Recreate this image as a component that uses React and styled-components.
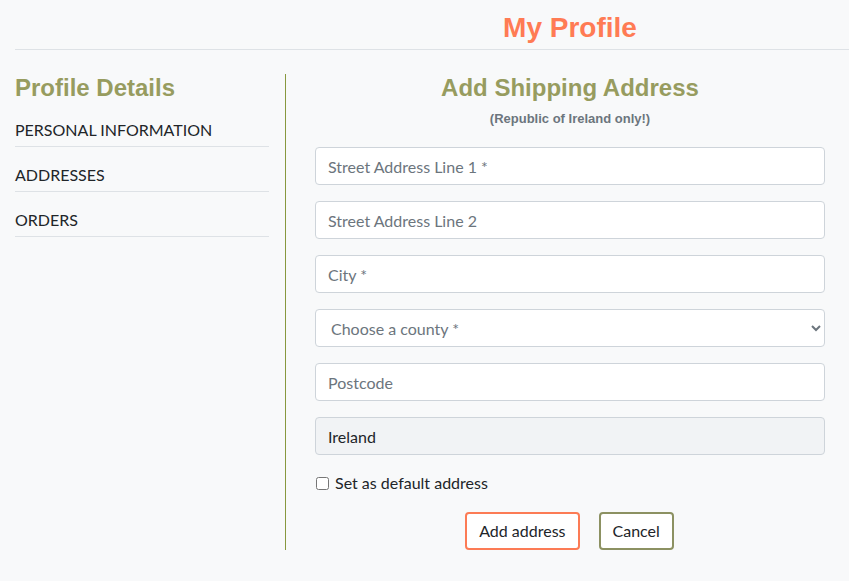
import React from "react";
import styled, { createGlobalStyle } from "styled-components";

const Global = createGlobalStyle`
  html, body { margin: 0; padding: 0; background: #f8f9fa; overflow: hidden; }
  body { font-family: Lato, "Noto Sans", sans-serif; color: #212529; }
  * { box-sizing: border-box; }
`;

const Page = styled.div`
  padding: 11px 0 0 15px;
  width: 870px;
`;

const Header = styled.header`
  display: grid;
  grid-template-columns: 270px 570px;
  border-bottom: 1px solid #dee2e6;
  padding-bottom: 4px;
`;

const Title = styled.h1`
  grid-column: 2;
  margin: 0;
  text-align: center;
  font-family: "Liberation Sans", Arial, sans-serif;
  font-weight: 700;
  font-size: 28px;
  line-height: 34px;
  color: #ff7b54;
`;

const Main = styled.div`
  display: grid;
  grid-template-columns: 270px 570px;
  margin-top: 24px;
`;

const Sidebar = styled.aside`
  padding-right: 16px;
`;

const Heading = styled.h2`
  margin: 0;
  font-family: "Liberation Sans", Arial, sans-serif;
  font-weight: 700;
  font-size: 24px;
  line-height: 28px;
  color: #979c5f;
  text-align: ${(p) => (p.$center ? "center" : "left")};
`;

const NavList = styled.ul`
  list-style: none;
  margin: 0;
  padding: 0;
`;

const NavItem = styled.li`
  padding: 19px 0 7px;
  line-height: 18px;
  font-size: 16px;
  color: #212529;
  text-transform: uppercase;
  border-bottom: 1px solid #dee2e6;
`;

const Content = styled.section`
  border-left: 1px solid #88983e;
  padding: 0 30px 0 29px;
`;

const Subtitle = styled.p`
  margin: 9px 0 0;
  text-align: center;
  font-family: "Liberation Sans", Arial, sans-serif;
  font-weight: 700;
  font-size: 13px;
  line-height: 16px;
  color: #6c757d;
`;

const Form = styled.form`
  display: flex;
  flex-direction: column;
  gap: 16px;
  margin-top: 20px;
`;

const Field = styled.input`
  height: 38px;
  width: 100%;
  padding: 6px 12px;
  font-family: Lato, sans-serif;
  font-size: 16px;
  line-height: 24px;
  color: #212529;
  background: ${(p) => (p.disabled ? "#f1f3f5" : "#fff")};
  border: 1px solid #ced4da;
  border-radius: 4px;
  outline: none;
  &::placeholder { color: #6c757d; opacity: 1; }
`;

const Select = styled.select`
  height: 38px;
  width: 100%;
  padding: 6px 8px 6px 11px;
  font-family: Lato, sans-serif;
  font-size: 16px;
  color: #6c757d;
  background: #fff;
  border: 1px solid #ced4da;
  border-radius: 4px;
  outline: none;
`;

const CheckRow = styled.label`
  display: flex;
  align-items: center;
  font-size: 16px;
  line-height: 24px;
  color: #212529;
`;

const Check = styled.input`
  margin: 0 6px 0 1px;
  width: 13px;
  height: 13px;
`;

const Actions = styled.div`
  display: flex;
  justify-content: center;
  gap: 19px;
  margin-top: 1px;
  padding-right: 1px;
`;

const Button = styled.button`
  height: 38px;
  padding: 5px 12px;
  font-family: Lato, sans-serif;
  font-size: 16px;
  line-height: 24px;
  color: #212529;
  background: #fff;
  border: 2px solid ${(p) => (p.$tone === "primary" ? "#fc7b55" : "#8c9162")};
  border-radius: 4px;
  cursor: pointer;
`;

export default function App() {
  return (
    <Page>
      <Global />
      <Header>
        <Title>My Profile</Title>
      </Header>
      <Main>
        <Sidebar>
          <Heading>Profile Details</Heading>
          <NavList>
            <NavItem>Personal Information</NavItem>
            <NavItem>Addresses</NavItem>
            <NavItem>Orders</NavItem>
          </NavList>
        </Sidebar>
        <Content>
          <Heading $center>Add Shipping Address</Heading>
          <Subtitle>(Republic of Ireland only!)</Subtitle>
          <Form onSubmit={(e) => e.preventDefault()}>
            <Field placeholder="Street Address Line 1 *" />
            <Field placeholder="Street Address Line 2" />
            <Field placeholder="City *" />
            <Select defaultValue="">
              <option value="" disabled>
                Choose a county *
              </option>
              <option>Dublin</option>
              <option>Cork</option>
              <option>Galway</option>
            </Select>
            <Field placeholder="Postcode" />
            <Field value="Ireland" disabled readOnly />
            <CheckRow>
              <Check type="checkbox" />
              Set as default address
            </CheckRow>
            <Actions>
              <Button type="submit" $tone="primary">Add address</Button>
              <Button type="button">Cancel</Button>
            </Actions>
          </Form>
        </Content>
      </Main>
    </Page>
  );
}
